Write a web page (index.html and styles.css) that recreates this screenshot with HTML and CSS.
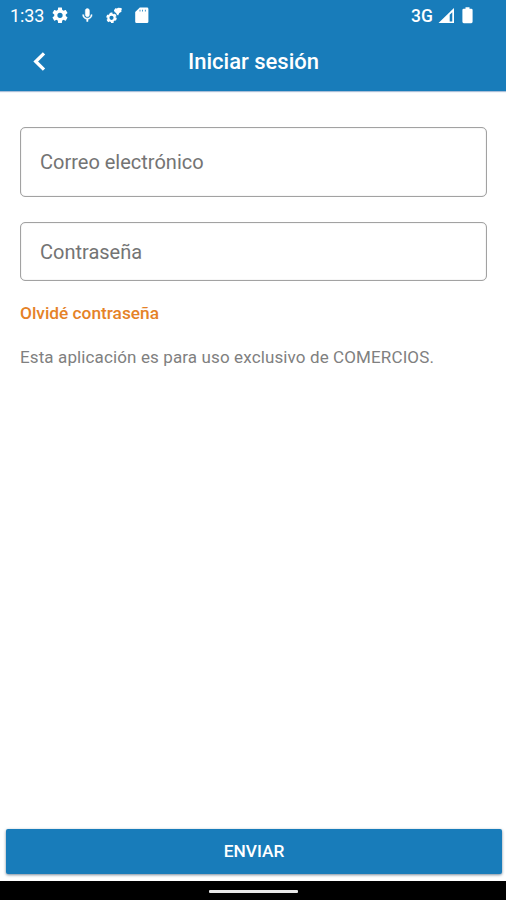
FILE: index.html
```html
<!DOCTYPE html>
<html lang="es">
<head>
<meta charset="utf-8">
<title>Iniciar sesión</title>
<link rel="stylesheet" href="styles.css">
</head>
<body>
<div class="screen">
  <header class="top">
    <div class="status">
      <span class="clock">1:33</span>
      <svg class="icons" width="100" height="32" viewBox="50 0 100 32" fill="#fff" aria-hidden="true">
        <g transform="translate(50.4 5.7) scale(.8)"><path d="M19.14 12.94c.04-.3.06-.61.06-.94s-.02-.64-.07-.94l2.03-1.58c.18-.14.23-.41.12-.61l-1.92-3.32c-.12-.22-.37-.29-.59-.22l-2.39.96c-.5-.38-1.03-.7-1.62-.94l-.36-2.54c-.04-.24-.24-.41-.48-.41h-3.84c-.24 0-.43.17-.47.41l-.36 2.54c-.59.24-1.13.57-1.62.94l-2.39-.96c-.22-.08-.47 0-.59.22L2.74 8.87c-.12.21-.08.47.12.61l2.03 1.58c-.05.3-.09.63-.09.94s.02.64.07.94l-2.03 1.58c-.18.14-.23.41-.12.61l1.92 3.32c.12.22.37.29.59.22l2.39-.96c.5.38 1.03.7 1.62.94l.36 2.54c.05.24.24.41.48.41h3.84c.24 0 .44-.17.47-.41l.36-2.54c.59-.24 1.13-.56 1.62-.94l2.39.96c.22.08.47 0 .59-.22l1.92-3.32c.12-.22.07-.47-.12-.61z M12 15.300a3.300 3.300 0 1 1 0-6.600 3.300 3.300 0 0 1 0 6.600z"/></g>
        <g transform="translate(79.200 7.200) scale(.68)" stroke="#fff" stroke-width=".7"><path d="M12 14c1.66 0 3-1.34 3-3V5c0-1.66-1.34-3-3-3S9 3.34 9 5v6c0 1.66 1.34 3 3 3z M17.3 11c0 3-2.54 5.1-5.3 5.1S6.7 14 6.7 11H5c0 3.41 2.72 6.23 6 6.72V21h2v-3.28c3.28-.49 6-3.31 6-6.72z"/></g>
        <circle cx="111.500" cy="17.800" r="3.200" fill="none" stroke="#fff" stroke-width="2.200"/>
        <circle cx="111.500" cy="17.800" r="4.500" fill="none" stroke="#fff" stroke-width="1.600" stroke-dasharray="2.700 2.012"/>
        <path d="M113.900 10.600l1.400-2.300 1.600.3 1.200-.9 3.200.3.600.9-.6 1.500.2 1.300-2.200 1.400-1.200 2.400-1.400-.9-.6-1.600-1.300-.8z"/>
        <path fill-rule="evenodd" d="M139.800 7.500h7.200a1.400 1.400 0 0 1 1.400 1.400v12.800a1.400 1.400 0 0 1-1.400 1.400h-10.400a1.400 1.400 0 0 1-1.400-1.400v-9.600zM139.600 9.700v1.800h.8v-1.800zM142.200 9.700v1.800h.8v-1.800zM144.900 9.700v1.800h.8v-1.800z"/>
      </svg>
      <span class="network">3G</span>
      <svg class="signal" width="40" height="32" viewBox="436 0 40 32" fill="#fff" aria-hidden="true">
        <path fill-rule="evenodd" d="M438.500 23L454 8v15zM449.700 14.800v6.700h2.600V12.200z"/>
        <path d="M465.500 7.200h4v1.500h1.700q1.400 0 1.400 1.400v11.700q0 1.400-1.400 1.400h-7.400q-1.400 0-1.400-1.400v-11.700q0-1.400 1.400-1.400h1.700z"/>
      </svg>
    </div>
    <div class="bar">
      <svg class="back" width="16" height="24" viewBox="0 0 16 24" aria-hidden="true"><path d="M13 3.300L4.700 11.500l8.300 8.200" fill="none" stroke="#fff" stroke-width="3.300"/></svg>
      <h1 class="title">Iniciar sesión</h1>
    </div>
  </header>
  <main class="form">
    <div class="field email"><span>Correo electrónico</span></div>
    <div class="field password"><span>Contraseña</span></div>
    <a class="forgot"><span>Olvidé contraseña</span></a>
    <p class="note"><span>Esta aplicación es para uso exclusivo de COMERCIOS.</span></p>
  </main>
  <button class="send"><span>ENVIAR</span></button>
  <footer class="nav"><div class="handle"></div></footer>
</div>
</body>
</html>
```
FILE: styles.css
```css
* { box-sizing: border-box; }
body { margin: 0; background: #fff; font-family: Roboto, "Liberation Sans", sans-serif; }
.screen { width: 506px; height: 900px; display: flex; flex-direction: column; overflow: hidden; }
.top { height: 91px; flex: none; background: #187cba; color: #fff; box-shadow: 0 1px 1px #a9bfd8; }
.status { height: 32px; display: flex; align-items: center; padding-left: 10px; }
.clock { width: 40px; font-size: 18px; line-height: 32px; letter-spacing: -.1px; }
.icons, .signal { display: block; flex: none; }
.network { width: 26px; margin-left: 261px; font-size: 17.5px; font-weight: 500; line-height: 31px; }
.signal { margin-right: 30px; margin-left: -1px; }
.bar { height: 59px; display: grid; grid-template-columns: 60px 1fr 60px; align-items: center; }
.back { margin-left: 31px; }
.title { margin: 0; padding-left: 1px; text-align: center; font-size: 22px; line-height: 28px; font-weight: 500; }
.form { flex: 1; padding: 36px 19px 0 20px; }
.field { display: flex; align-items: center; padding-left: 19px; border: 1px solid #a2a2a2; border-radius: 5px; box-shadow: inset 0 0 1px #aaa; color: #747474; font-size: 20px; }
.email { height: 70px; }
.password { height: 59px; margin-top: 25px; }
.forgot { display: block; margin-top: 20px; color: #e58227; font-size: 17.3px; line-height: 24px; font-weight: 500; }
.note { margin: 20px 0 0; color: #808080; font-size: 17px; line-height: 24px; letter-spacing: .12px; white-space: nowrap; }
.send { height: 45px; flex: none; margin: 0 4px 7px 6px; padding: 0; border: 0; border-radius: 2px; background: #187cba; color: #fff; font: 500 17.3px/45px Roboto, "Liberation Sans", sans-serif; box-shadow: 0 1px 3px #789; }
.nav { height: 19px; flex: none; background: #000; display: flex; justify-content: center; padding-top: 9px; }
.handle { width: 89px; height: 3px; border-radius: 1px; background: #e8e8e8; }
```
